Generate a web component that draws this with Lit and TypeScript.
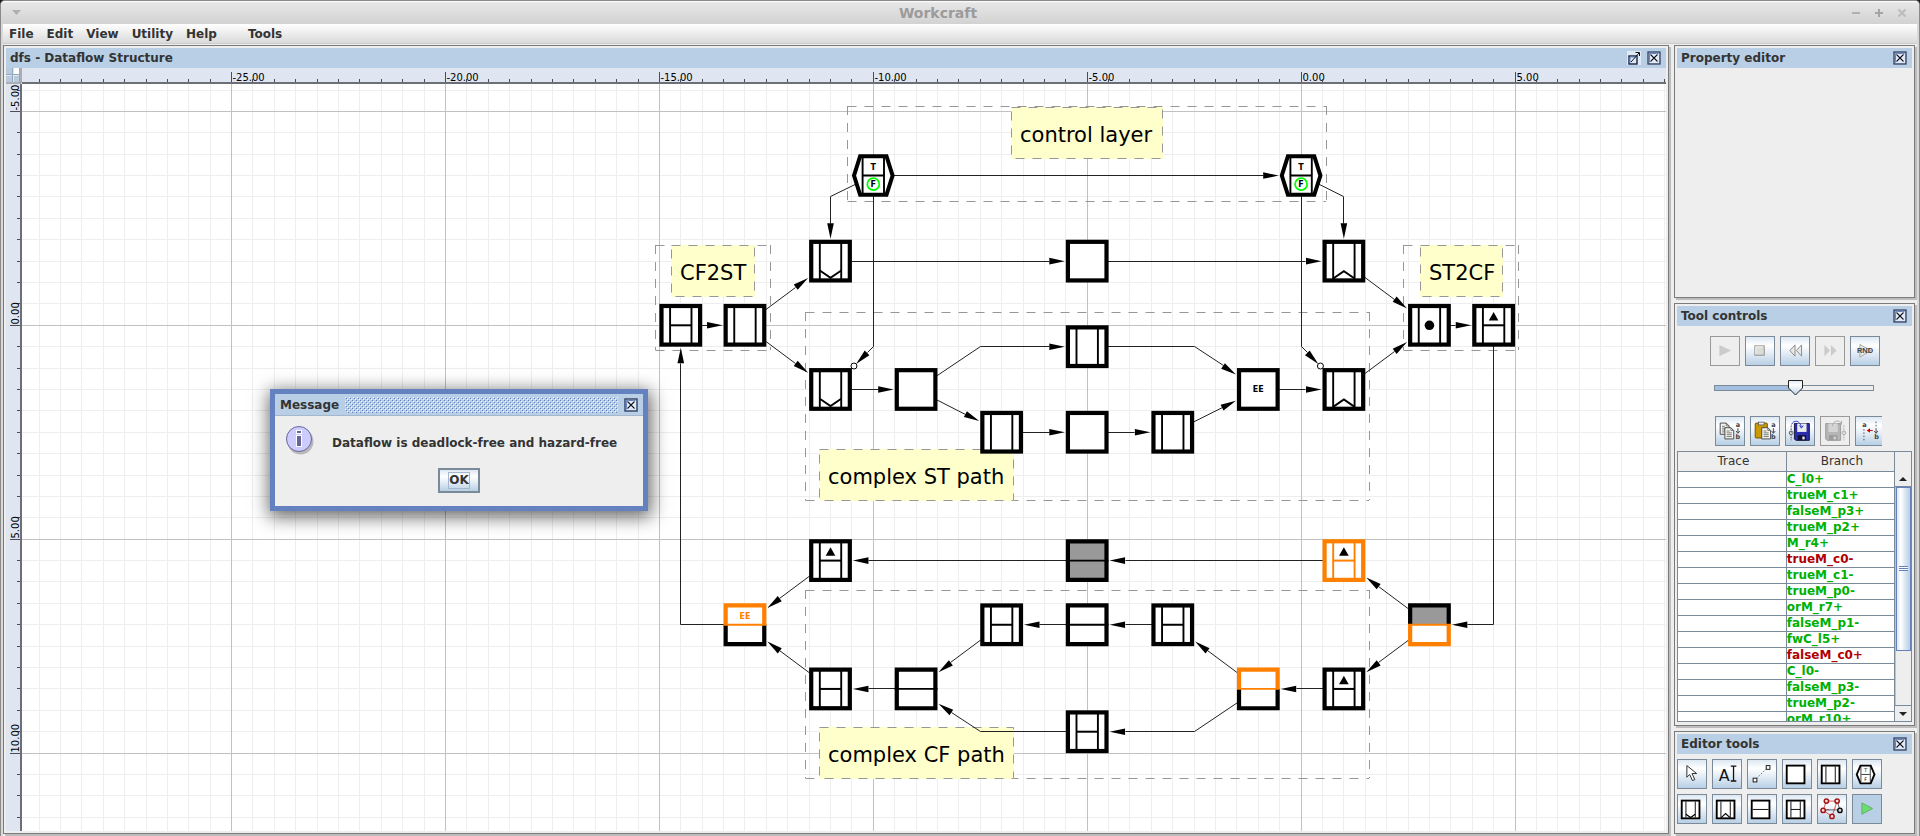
import { LitElement, html, svg, css, type SVGTemplateResult } from "lit";
import { customElement, property, state } from "lit/decorators.js";

/* ---------- Canvas geometry: model units to canvas pixels ---------- */
const UNIT = 42.78;
const ORIGIN_X = 1279.1;
const ORIGIN_Y = 241.3;
const px = (u: number) => u * UNIT + ORIGIN_X;
const py = (u: number) => u * UNIT + ORIGIN_Y;
const crisp = (v: number) => Math.floor(v) + 0.5;

type Point = [number, number];

interface NodeSpec {
  at: Point;
  kind: "logic" | "register" | "push" | "pop" | "cflogic" | "cfregister" | "control";
  color?: string;
  top?: string;
  bottom?: string;
  fillTop?: string;
  fillBottom?: string;
  text?: string;
  or?: boolean;
  dot?: boolean;
}

const ORANGE = "#ff8000";
const GREY = "#999999";

const NODES: NodeSpec[] = [
  { at: [-10, -3.5], kind: "control" },
  { at: [0, -3.5], kind: "control" },
  { at: [-11, -1.5], kind: "push" },
  { at: [-5, -1.5], kind: "logic" },
  { at: [1, -1.5], kind: "pop" },
  { at: [-14.5, 0], kind: "cfregister" },
  { at: [-13, 0], kind: "register" },
  { at: [3, 0], kind: "register", dot: true },
  { at: [4.5, 0], kind: "cfregister", or: true },
  { at: [-11, 1.5], kind: "push" },
  { at: [-9, 1.5], kind: "logic" },
  { at: [-5, 0.5], kind: "register" },
  { at: [-7, 2.5], kind: "register" },
  { at: [-5, 2.5], kind: "logic" },
  { at: [-3, 2.5], kind: "register" },
  { at: [-1, 1.5], kind: "logic", text: "EE" },
  { at: [1, 1.5], kind: "pop" },
  { at: [-11, 5.5], kind: "cfregister", or: true },
  { at: [-5, 5.5], kind: "cflogic", fillTop: GREY, fillBottom: GREY },
  { at: [1, 5.5], kind: "cfregister", color: ORANGE, or: true },
  { at: [-13, 7], kind: "cflogic", top: ORANGE, text: "EE" },
  { at: [-7, 7], kind: "cfregister" },
  { at: [-5, 7], kind: "cflogic" },
  { at: [-3, 7], kind: "cfregister" },
  { at: [3, 7], kind: "cflogic", bottom: ORANGE, fillTop: GREY },
  { at: [-11, 8.5], kind: "cfregister" },
  { at: [-9, 8.5], kind: "cflogic" },
  { at: [-1, 8.5], kind: "cflogic", top: ORANGE },
  { at: [1, 8.5], kind: "cfregister", or: true },
  { at: [-5, 9.5], kind: "cfregister" },
];

const ARCS: { path: Point[]; inverted?: boolean }[] = [
  { path: [[-10, -3.5], [0, -3.5]] },
  { path: [[-10, -3.5], [-11, -3], [-11, -1.5]] },
  { path: [[-10, -3.5], [-10, 0.5], [-11, 1.5]], inverted: true },
  { path: [[0, -3.5], [1, -3], [1, -1.5]] },
  { path: [[0, -3.5], [0, 0.5], [1, 1.5]], inverted: true },
  { path: [[-11, -1.5], [-5, -1.5]] },
  { path: [[-5, -1.5], [1, -1.5]] },
  { path: [[1, -1.5], [3, 0]] },
  { path: [[-14.5, 0], [-13, 0]] },
  { path: [[-13, 0], [-11, -1.5]] },
  { path: [[-13, 0], [-11, 1.5]] },
  { path: [[-11, 1.5], [-9, 1.5]] },
  { path: [[-9, 1.5], [-7.5, 0.5], [-5, 0.5]] },
  { path: [[-5, 0.5], [-2.5, 0.5], [-1, 1.5]] },
  { path: [[-9, 1.5], [-7, 2.5]] },
  { path: [[-7, 2.5], [-5, 2.5]] },
  { path: [[-5, 2.5], [-3, 2.5]] },
  { path: [[-3, 2.5], [-1, 1.5]] },
  { path: [[-1, 1.5], [1, 1.5]] },
  { path: [[1, 1.5], [3, 0]] },
  { path: [[3, 0], [4.5, 0]] },
  { path: [[4.5, 0], [4.5, 7], [3, 7]] },
  { path: [[3, 7], [1, 5.5]] },
  { path: [[3, 7], [1, 8.5]] },
  { path: [[1, 5.5], [-5, 5.5]] },
  { path: [[-5, 5.5], [-11, 5.5]] },
  { path: [[-11, 5.5], [-13, 7]] },
  { path: [[1, 8.5], [-1, 8.5]] },
  { path: [[-1, 8.5], [-3, 7]] },
  { path: [[-3, 7], [-5, 7]] },
  { path: [[-5, 7], [-7, 7]] },
  { path: [[-7, 7], [-9, 8.5]] },
  { path: [[-9, 8.5], [-11, 8.5]] },
  { path: [[-11, 8.5], [-13, 7]] },
  { path: [[-1, 8.5], [-2.5, 9.5], [-5, 9.5]] },
  { path: [[-5, 9.5], [-7.5, 9.5], [-9, 8.5]] },
  { path: [[-13, 7], [-14.5, 7], [-14.5, 0]] },
];

/* x1, y1, x2, y2 in canvas pixels */
const GROUPS: [number, number, number, number][] = [
  [825, 22, 1304, 117],
  [633, 161, 748, 266],
  [783, 228, 1347, 416],
  [1381, 161, 1496, 266],
  [783, 506, 1347, 694],
];

const LABELS: { text: string; x: number; y: number; w: number }[] = [
  { text: "control layer", x: 989, y: 23, w: 152 },
  { text: "CF2ST", x: 649, y: 161, w: 84 },
  { text: "ST2CF", x: 1398, y: 161, w: 83 },
  { text: "complex ST path", x: 797, y: 365, w: 195 },
  { text: "complex CF path", x: 797, y: 643, w: 195 },
];

/* Half-unit steps whose position falls inside a length of pixels */
const steps = (origin: number, length: number) => {
  const from = Math.ceil((-origin / UNIT) * 2);
  const to = Math.floor(((length - origin) / UNIT) * 2);
  return Array.from({ length: Math.max(0, to - from + 1) }, (_, i) => from + i);
};

function drawArc(arc: { path: Point[]; inverted?: boolean }): SVGTemplateResult {
  const pts = arc.path.map(([x, y]) => [px(x), py(y)] as Point);
  const [bx, by] = pts[pts.length - 1];
  const [ax, ay] = pts[pts.length - 2];
  const dx = bx - ax;
  const dy = by - ay;
  const len = Math.hypot(dx, dy);
  const ux = dx / len;
  const uy = dy / len;
  const half = UNIT / 2 + 1;
  const back = half / Math.max(Math.abs(ux), Math.abs(uy));
  let tx = bx - ux * back;
  let ty = by - uy * back;
  const bubble: Point = [tx - ux * 1.5, ty - uy * 1.5];
  if (arc.inverted) {
    tx -= ux * 4.5;
    ty -= uy * 4.5;
  }
  const hx = tx - ux * 15.5;
  const hy = ty - uy * 15.5;
  const line = [...pts.slice(0, -1), [hx, hy] as Point];
  const flat = (p: Point[]) =>
    p.map(([x, y]) => `${Math.round(x - 0.5) + 0.5},${Math.round(y - 0.5) + 0.5}`).join(" ");
  return svg`
    <polyline class="arc" points=${flat(line)}></polyline>
    <polygon points="${tx},${ty} ${hx - uy * 3.3},${hy + ux * 3.3} ${hx + uy * 3.3},${hy - ux * 3.3}"></polygon>
    ${arc.inverted ? svg`<circle class="bubble" cx=${bubble[0]} cy=${bubble[1]} r="3"></circle>` : ""}`;
}

function drawNode(n: NodeSpec): SVGTemplateResult {
  const c = n.color ?? "#000";
  const cx = px(n.at[0]);
  const cy = py(n.at[1]);
  const frame = svg`<rect x="-19.3" y="-19.3" width="38.6" height="38.6" fill="#fff" stroke=${c} stroke-width="4.2"></rect>`;
  const bars = svg`<path d="M-10.7-19V19M10.7-19V19" stroke=${c} stroke-width="1.9"></path>`;
  let body: SVGTemplateResult;
  switch (n.kind) {
    case "logic":
      body = svg`${frame}`;
      break;
    case "register":
      body = svg`${frame}${bars}`;
      break;
    case "push":
      body = svg`${frame}${bars}<path d="M-10.7 9.3L0 16.6L10.7 9.3" fill="none" stroke="#000" stroke-width="1.9"></path>`;
      break;
    case "pop":
      body = svg`${frame}${bars}<path d="M-10.7 17.4L0 10L10.7 17.4" fill="none" stroke="#000" stroke-width="1.9"></path>`;
      break;
    case "cfregister":
      body = svg`${frame}${bars}<path d="M-10.7 0H10.7" stroke=${c} stroke-width="2"></path>`;
      break;
    case "cflogic": {
      const t = n.top ?? "#000";
      const b = n.bottom ?? "#000";
      const mid = n.top ?? n.bottom ?? "#000";
      body = svg`
        <rect x="-18" y="-18" width="36" height="18" fill=${n.fillTop ?? "#fff"}></rect>
        <rect x="-18" y="0" width="36" height="18" fill=${n.fillBottom ?? "#fff"}></rect>
        <path d="M-19.3 0V-19.3H19.3V0" fill="none" stroke=${t} stroke-width="4.2"></path>
        <path d="M-19.3 0V19.3H19.3V0" fill="none" stroke=${b} stroke-width="4.2"></path>
        <path d="M-21.4 0H21.4" stroke=${mid} stroke-width="1.8"></path>`;
      break;
    }
    default:
      body = svg`
        <path d="M-13.2-19.3H13.2L19.3 0L13.2 19.3H-13.2L-19.3 0Z" fill="#fff" stroke="#000" stroke-width="4"></path>
        <path d="M-10.7-19V19M10.7-19V19M-10.7 0H10.7" stroke="#000" stroke-width="1.9"></path>
        <text class="tiny" x="0" y="-6">T</text>
        <circle cx="0" cy="8.6" r="6" fill="none" stroke="#00ff00" stroke-width="1.8"></circle>
        <text class="tiny" x="0" y="11.500">F</text>`;
  }
  return svg`<g transform="translate(${cx},${cy})">
    ${body}
    ${n.or ? svg`<path d="M0-13.300L4.800-4.800H-4.800Z"></path>` : ""}
    ${n.dot ? svg`<circle r="4.800"></circle>` : ""}
    ${n.text ? svg`<text class="tiny" x="0" y=${n.kind === "cflogic" ? -6 : 3} fill=${n.top ?? "#000"}>${n.text}</text>` : ""}
  </g>`;
}

/* ---------- Work area with rulers ---------- */
@customElement("model-canvas")
export class ModelCanvas extends LitElement {
  @state() private sheetWidth = 0;
  @state() private sheetHeight = 0;

  private observer = new ResizeObserver(() => this.measure());

  connectedCallback() {
    super.connectedCallback();
    this.observer.observe(this);
  }

  disconnectedCallback() {
    this.observer.disconnect();
    super.disconnectedCallback();
  }

  firstUpdated() {
    this.measure();
  }

  private measure() {
    this.sheetWidth = this.clientWidth - 16;
    this.sheetHeight = this.clientHeight - 16;
  }

  static styles = css`
    :host {
      display: grid;
      grid-template: 16px minmax(0, 1fr) / 16px minmax(0, 1fr);
      flex: 1;
      min-height: 0;
      font-family: "DejaVu Sans", sans-serif;
    }
    svg {
      display: block;
      width: 100%;
      height: 100%;
      overflow: hidden;
    }
    .corner, .ruler { background: #dfe5f1; }
    .sheet { background: #fff; }
    .tick { stroke: #4a4d55; stroke-width: 1; shape-rendering: crispEdges; }
    .edge { stroke: #6c6f76; stroke-width: 2; }
    .mark { font-size: 10px; fill: #000; }
    .minor { stroke: #eeeeee; shape-rendering: crispEdges; }
    .major { stroke: #c1c1c1; shape-rendering: crispEdges; }
    .arc { fill: none; stroke: #222; stroke-width: 1; }
    .bubble { fill: #fff; stroke: #000; stroke-width: 1; }
    .dash { fill: none; stroke: #979797; stroke-dasharray: 9 8; }
    .note { fill: #ffffcc; }
    .caption { font-size: 21px; }
    .tiny { font-size: 8px; font-weight: bold; text-anchor: middle; }
  `;

  render() {
    const columns = steps(ORIGIN_X, this.sheetWidth);
    const lines = steps(ORIGIN_Y, this.sheetHeight);
    return html`
      <svg class="corner" aria-hidden="true">
        <path d="M0 0h6v6H0zM0 8h6v6H0zM8 8h6v6H8z" fill="#b8cadc"></path>
        <path d="M8 0h6v6H8z" fill="#fff"></path>
        <path d="M0 6.500H14M6.500 0V14M13.500 0V14" stroke="#93a9bf"></path>
        <path d="M15 0V15H0" stroke="#777" fill="none"></path>
      </svg>
      <svg class="ruler">
        ${columns.map((i) => {
          const x = crisp(px(i / 2));
          return i % 10 === 0
            ? svg`<line class="tick" x1=${x} x2=${x} y1="4" y2="15"></line>
                <text class="mark" x=${x + 1} y="13">${(i / 2).toFixed(2)}</text>`
            : svg`<line class="tick" x1=${x} x2=${x} y1="11" y2="15"></line>`;
        })}
        <line class="edge" x1="0" x2="100%" y1="15" y2="15"></line>
      </svg>
      <svg class="ruler">
        ${lines.map((i) => {
          const y = crisp(py(i / 2));
          return i % 10 === 0
            ? svg`<line class="tick" x1="4" x2="15" y1=${y} y2=${y}></line>
                <text class="mark" transform="translate(13,${y - 1}) rotate(-90)">${(i / 2).toFixed(2)}</text>`
            : svg`<line class="tick" x1="11" x2="15" y1=${y} y2=${y}></line>`;
        })}
        <line class="edge" x1="15" x2="15" y1="0" y2="100%"></line>
      </svg>
      <svg class="sheet">
        ${[false, true].map((major) => [
          ...columns.filter((i) => (i % 10 === 0) === major).map((i) => {
            const x = crisp(px(i / 2));
            return svg`<line class=${major ? "major" : "minor"} x1=${x} x2=${x} y1="0" y2="100%"></line>`;
          }),
          ...lines.filter((i) => (i % 10 === 0) === major).map((i) => {
            const y = crisp(py(i / 2));
            return svg`<line class=${major ? "major" : "minor"} x1="0" x2="100%" y1=${y} y2=${y}></line>`;
          }),
        ])}
        ${GROUPS.map(([a, b, c, d]) => svg`<path class="dash"
          d="M${a + 0.5} ${b + 0.5}H${c}M${c + 0.5} ${b}V${d}M${a + 0.5} ${d + 0.5}H${c}M${a + 0.5} ${b}V${d}"></path>`)}
        ${LABELS.map((l) => svg`
          <rect class="note" x=${l.x} y=${l.y} width=${l.w} height="52"></rect>
          <rect class="dash" x=${l.x + 0.5} y=${l.y + 0.5} width=${l.w - 1} height="51"></rect>
          <text class="caption" x=${l.x + 9} y=${l.y + 35}>${l.text}</text>`)}
        ${ARCS.map(drawArc)}
        ${NODES.map(drawNode)}
      </svg>
    `;
  }
}

/* ---------- Docked panel with a caption bar ---------- */
const closeIcon = html`<svg viewBox="0 0 14 14" width="14" height="14" aria-hidden="true">
  <rect x="1" y="1" width="12" height="12" fill="#dce8f6" stroke="#2f3f66" stroke-width="1.400"></rect>
  <path d="M2.500 11.500V2.500H11.500" stroke="#6382bf" fill="none"></path>
  <path d="M3.500 3.500L10.500 10.500M10.500 3.500L3.500 10.500" stroke="#fff" stroke-width="2.600"></path>
  <path d="M3.500 3.500L10.500 10.500M10.500 3.500L3.500 10.500" stroke="#0c1024" stroke-width="1.200"></path>
</svg>`;

@customElement("dock-panel")
export class DockPanel extends LitElement {
  @property() caption = "";
  @property({ type: Boolean }) maximizable = false;

  static styles = css`
    :host {
      display: flex;
      flex-direction: column;
      min-width: 0;
      min-height: 0;
      padding: 2px;
      border: 1px solid #7b7b7b;
      box-shadow: 2px 2px 0 #bdbdbd;
      background: #eeeeee;
    }
    .bar {
      display: flex;
      align-items: center;
      gap: 6px;
      height: 20px;
      flex: none;
      padding: 0 5px 0 4px;
      background: #b8cfe5;
    }
    .caption {
      flex: 1;
      margin: 0;
      font: bold 12px/20px "DejaVu Sans", sans-serif;
      color: #333;
    }
    .tool {
      display: block;
      padding: 0;
      border: 0;
      background: #dfeaf5;
      width: 14px;
      height: 14px;
      line-height: 0;
    }
  `;

  render() {
    return html`
      <div class="bar">
        <h2 class="caption">${this.caption}</h2>
        ${this.maximizable
          ? html`<button class="tool" aria-label="Maximize">
              <svg viewBox="0 0 14 14" width="14" height="14">
                <rect x="2" y="5" width="8" height="8" fill="#dce8f6" stroke="#1a2340" stroke-width="1.400"></rect>
                <path d="M3 12V6h7" stroke="#6382bf" fill="none"></path>
                <path d="M4 11L12 2M8.500 1.500H12.500V5" stroke="#111" fill="none"></path>
              </svg>
            </button>`
          : ""}
        <button class="tool" aria-label="Close">${closeIcon}</button>
      </div>
      <slot></slot>
    `;
  }
}

/* ---------- Tool icons ---------- */
const icon = (body: SVGTemplateResult) =>
  html`<svg viewBox="0 0 30 30" width="30" height="30" aria-hidden="true">${body}</svg>`;

const docs = (x: number, y: number) => svg`<g transform="translate(${x},${y})">
  <path d="M0 0H6.500L9.500 3V12H0Z" fill="#f4f4ee" stroke="#444"></path>
  <path d="M6.500 0V3H9.500M2 3.500H5M2 5.500H7.500M2 7.500H7.500M2 9.500H7.500" stroke="#555" stroke-width=".8" fill="none"></path></g>`;
const aToB = (x: number) => svg`
  <text x=${x} y="11" font-size="7" font-weight="bold" text-anchor="middle" fill="#444">a</text>
  <text x=${x} y="24" font-size="7" font-weight="bold" text-anchor="middle" fill="#444">b</text>
  <path d="M${x} 12V17M${x - 2} 15L${x} 17.500L${x + 2} 15" stroke="#444" fill="none"></path>`;
const floppy = (body: string, line: string, label: string) => svg`
  <path d="M9 7H25V25H10.500L9 23.500Z" fill=${body} stroke=${line}></path>
  <rect x="12" y="7" width="10" height="9" fill=${label}></rect>
  <rect x="12.500" y="19.500" width="9" height="5.500" fill=${line}></rect>
  <rect x="17.500" y="21" width="2.500" height="3" fill=${label}></rect>`;

const PLAYBACK = [
  { name: "Play", off: true, art: svg`<path d="M9 8.500L21.500 14.500L9 20.500Z" fill="#cbcbcb"></path>` },
  { name: "Stop", art: svg`<rect x="9.500" y="9.500" width="10" height="10" fill="#dcdcd8" stroke="#8a8a8a"></rect><path d="M10.500 18.500V10.500H18.500" stroke="#f8f8f8" fill="none"></path>` },
  { name: "Step back", art: svg`<path d="M15 8.500V20.500L9.500 14.500ZM22 8.500V20.500L16.500 14.500Z" fill="#e8e8e4" stroke="#858585"></path>` },
  { name: "Step forward", off: true, art: svg`<path d="M9 8.500L15 14.500L9 20.500ZM16 8.500L22 14.500L16 20.500Z" fill="#cbcbcb"></path>` },
  { name: "Random", art: svg`<path d="M9.500 8L21.500 14.500L9.500 21.500Z" fill="#e6e8ea" stroke="#a5a5a5"></path><text x="15" y="17.500" font-size="8" font-weight="bold" text-anchor="middle" fill="#444" font-family="Liberation Sans">RND</text>` },
];

const TRACE_TOOLS = [
  { name: "Copy trace", art: svg`${docs(4.5, 6.5)}${docs(9.5, 11.5)}${aToB(23.5)}` },
  { name: "Paste trace", art: svg`<rect x="4.500" y="6.500" width="13" height="16" rx="1" fill="#c99a06" stroke="#6b5203"></rect><rect x="8" y="5.500" width="6" height="3" fill="#eee" stroke="#555" stroke-width=".8"></rect>${docs(11.5, 11.5)}${aToB(24)}` },
  { name: "Save trace", art: svg`${floppy("#2c2cb0", "#111136", "#ececec")}<path d="M6 8C8 3 15 3 16.500 11M14.500 9L16.500 12L18.500 9" stroke="#2233cc" fill="none"></path><path d="M5.500 9V25" stroke="#555" stroke-dasharray="2 1"></path><circle cx="5.500" cy="17" r="2" fill="none" stroke="#555"></circle>` },
  { name: "Load trace", off: true, art: svg`<g transform="translate(-4,0)">${floppy("#b5b5b5", "#9b9b9b", "#d4d4d4")}</g><path d="M12 10C13 3 20 3 22 7M22 4V8H18" stroke="#aaa" fill="none"></path><path d="M24.500 9V25" stroke="#aaa" stroke-dasharray="2 1"></path><circle cx="24.500" cy="17" r="2" fill="none" stroke="#aaa"></circle>` },
  { name: "Merge trace", art: svg`<text x="9" y="11" font-size="7" font-weight="bold" text-anchor="middle" fill="#444">a</text><text x="22" y="24" font-size="7" font-weight="bold" text-anchor="middle" fill="#444">b</text><path d="M8.500 13V25M21.500 5V12" stroke="#444" stroke-dasharray="1.500 2"></path><path d="M21.500 12V17M19.500 15L21.500 17.500L23.500 15" stroke="#444" fill="none"></path><path d="M18 14.500H13" stroke="#c00"></path><path d="M15 12L11.500 14.500L15 17Z" fill="#c00"></path>` },
];

const box = svg`<rect x="4" y="6" width="19" height="19" fill="#fff" stroke="#000" stroke-width="2"></rect>`;
const sides = svg`<path d="M8.500 7V24M18.500 7V24" stroke="#000"></path>`;

const EDITOR_TOOLS = [
  { name: "Select", art: svg`<path d="M9.500 6L9.500 18.500L12.500 15.500L15.500 22L18 21L15 14.500H20Z" fill="#fff" stroke="#222"></path>` },
  { name: "Text note", art: svg`<text x="12" y="22" font-size="17" text-anchor="middle" fill="#111">A</text><path d="M19 6.500H25M19 22.500H25M22 6.500V22.500" stroke="#111" stroke-width="1.400"></path>` },
  { name: "Connect", art: svg`<path d="M9 20L20 9" stroke="#555" stroke-dasharray="1.500 2"></path><rect x="5.500" y="19.500" width="4" height="4" fill="#fff" stroke="#111"></rect><rect x="19.500" y="6" width="4" height="4" fill="#fff" stroke="#111"></rect>` },
  { name: "Logic", art: box },
  { name: "Register", art: svg`${box}${sides}` },
  { name: "Control register", art: svg`<path d="M8 6H19L23 15.500L19 25H8L4 15.500Z" fill="#fff" stroke="#000" stroke-width="2"></path><path d="M8.500 7V24M18.500 7V24M9 15.500H18" stroke="#000" stroke-width=".8"></path><text x="13.500" y="13" font-size="5" text-anchor="middle">T</text><text x="13.500" y="22" font-size="5" text-anchor="middle">F</text>` },
  { name: "Push register", art: svg`${box}${sides}<path d="M8.500 20.500L13.500 24L18.500 20.500" fill="none" stroke="#000" stroke-width="1.300"></path>` },
  { name: "Pop register", art: svg`${box}${sides}<path d="M8.500 24.500L13.500 20L18.500 24.500" fill="none" stroke="#000" stroke-width="1.300"></path>` },
  { name: "Counterflow logic", art: svg`${box}<path d="M5 15.500H22" stroke="#000"></path>` },
  { name: "Counterflow register", art: svg`${box}${sides}<path d="M8.500 15.500H18.500" stroke="#000"></path>` },
  { name: "Cycle analyser", art: svg`<path d="M9 6.500H20.500L15 23L5.500 16.500L9 6.500M5.500 16.500L12 15.500" fill="none" stroke="#e04848"></path><path d="M8 16H23.500L20.500 6.500" fill="none" stroke="#555"></path>
      <g fill="#f4dede" stroke="#a01515" stroke-width="1.600"><circle cx="9" cy="6.500" r="2.300"></circle><circle cx="20.500" cy="6.500" r="2.300"></circle><circle cx="5.500" cy="16.500" r="2.300"></circle><circle cx="15" cy="23" r="2.300"></circle></g><circle cx="23.500" cy="16.500" r="2.300" fill="#ddd" stroke="#111" stroke-width="1.600"></circle>` },
  { name: "Simulation", on: true, art: svg`<path d="M9.500 8.500L21 14.500L9.500 20.500Z" fill="#6edc6e" stroke="#5aae6c"></path>` },
];

const BRANCH: [string, boolean?][] = [
  ["C_l0+"], ["trueM_c1+"], ["falseM_p3+"], ["trueM_p2+"], ["M_r4+"],
  ["trueM_c0-", true], ["trueM_c1-"], ["trueM_p0-"], ["orM_r7+"], ["falseM_p1-"],
  ["fwC_l5+"], ["falseM_c0+", true], ["C_l0-"], ["falseM_p3-"], ["trueM_p2-"], ["orM_r10+"],
];

/* ---------- Application window ---------- */
@customElement("app-root")
export class AppRoot extends LitElement {
  static styles = css`
    :host {
      display: block;
      height: 100vh;
      background: #1a1a1a;
      font-family: "DejaVu Sans", sans-serif;
      color: #333;
    }
    * { box-sizing: border-box; }
    button { font: inherit; color: inherit; margin: 0; padding: 0; }
    .window {
      display: flex;
      flex-direction: column;
      height: 100%;
      border: 1px solid #8a8a8a;
      border-bottom: 0;
      border-radius: 5px 5px 0 0;
      background: #d9d9d9;
      overflow: hidden;
    }
    .titlebar {
      display: flex;
      align-items: center;
      height: 23px;
      flex: none;
      padding: 0 6px 0 11px;
      background: linear-gradient(#fff 0, #e6e6e6 2px, #d2d2d2);
    }
    .title {
      flex: 1;
      margin: 0 0 0 10px;
      text-align: center;
      font-size: 14px;
      font-weight: bold;
      line-height: 22px;
      color: #9b9b9b;
    }
    .winbutton { border: 0; background: none; width: 23px; height: 16px; line-height: 0; }
    .winbutton.lead { width: 10px; }
    .body {
      display: flex;
      flex-direction: column;
      flex: 1;
      min-height: 0;
      margin: 0 2px;
      background: #eeeeee;
    }
    .menubar {
      display: flex;
      align-items: center;
      gap: 13px;
      height: 20px;
      flex: none;
      padding: 0 6px;
      background: linear-gradient(#fff, #dadada);
      border-bottom: 1px solid #ccc;
    }
    .menu {
      border: 0;
      background: none;
      font-size: 12px;
      font-weight: bold;
      line-height: 18px;
    }
    .menu.apart { margin-left: 18px; }
    .workspace {
      display: flex;
      flex: 1;
      min-height: 0;
      gap: 5px;
      padding: 1px 2px 2px 0;
    }
    .editor { flex: 1; }
    .docks {
      display: grid;
      grid-template-rows: 253px minmax(0, 1fr) 103px;
      gap: 5px;
      width: 241px;
      flex: none;
    }
    .controls { display: flex; flex-direction: column; flex: 1; min-height: 0; }
    .strip { width: 175px; margin: 0 auto; overflow: hidden; display: flex; flex-direction: column; }
    .row { display: flex; gap: 5px; }
    .playback { padding: 10px 2px 14px 3px; }
    .tracebar { padding: 20px 0 5px 8px; }
    .tool {
      width: 30px;
      height: 30px;
      flex: none;
      border: 1px solid #7a8a99;
      background: linear-gradient(#dde8f3, #fff 30%, #dde8f3 65%, #b8cfe5);
      line-height: 0;
      display: flex;
      align-items: center;
      justify-content: center;
    }
    .tool:disabled { border-color: #999; background: #eeeeee; }
    .tool.on { background: #b8cfe5; }
    .speed {
      appearance: none;
      width: 160px;
      height: 16px;
      margin: 0 0 0 7px;
      background: none;
    }
    .speed::-webkit-slider-runnable-track {
      height: 6px;
      border: 1px solid #7a8a99;
      background: linear-gradient(90deg, #a3bfe0 51%, #eeeeee 51%);
    }
    .speed::-webkit-slider-thumb {
      appearance: none;
      width: 15px;
      height: 16px;
      margin-top: -6px;
      background: url('data:image/svg+xml,<svg xmlns="http://www.w3.org/2000/svg" width="15" height="16"><defs><linearGradient id="g" x2="0" y2="1"><stop stop-color="%23dde8f3"/><stop offset=".3" stop-color="white"/><stop offset="1" stop-color="%23b8cfe5"/></linearGradient></defs><path d="M.5 .5H14.500V8L7.500 15L.5 8Z" fill="url(%23g)" stroke="%23222"/></svg>');
    }
    .list {
      display: flex;
      flex: 1;
      min-height: 0;
      border: 1px solid #7a8a99;
      margin: 0 0 1px;
    }
    .rows { flex: 1; min-width: 0; overflow: hidden; }
    table { width: 100%; border-collapse: collapse; table-layout: fixed; font-size: 12px; }
    th {
      height: 19px;
      padding: 1px 0 0 3px;
      font-weight: normal;
      line-height: 17px;
      background: #eeeeee;
      border-bottom: 1px solid #7a8a99;
      border-right: 1px solid #7a8a99;
    }
    td {
      height: 16px;
      padding: 0;
      line-height: 15px;
      font-weight: bold;
      background: #fff;
      color: #00b000;
      white-space: nowrap;
      border-bottom: 1px solid #7a8a99;
      border-right: 1px solid #7a8a99;
    }
    td.alert { color: #b00000; }
    .scroll { display: flex; flex-direction: column; width: 16px; padding-top: 19px; flex: none; }
    .step {
      height: 16px;
      flex: none;
      border: 0;
      border-bottom: 1px solid #7a8a99;
      background: #eeeeee;
      line-height: 0;
    }
    .step.down { border-bottom: 0; border-top: 1px solid #7a8a99; }
    .track { flex: 1; min-height: 0; background: #eee; border-left: 1px solid #b8c4d0; }
    .thumb {
      height: 75%;
      border: 1px solid #6382bf;
      background: linear-gradient(90deg, #dde8f3, #fff 30%, #dde8f3 60%, #b8cfe5);
      display: flex;
      align-items: center;
      justify-content: center;
    }
    .grip { width: 9px; height: 5px; background: repeating-linear-gradient(#6382bf 0 1px, #fff 1px 2px); }
    .palette {
      display: grid;
      grid-template-columns: repeat(6, 30px);
      gap: 5px;
      padding-top: 5px;
    }
    .dialog {
      position: absolute;
      left: 270px;
      top: 389px;
      width: 378px;
      border: 5px solid #6382bf;
      background: #eeeeee;
      box-shadow: 1px 4px 17px 2px rgba(0, 0, 0, 0.6);
      color: #333;
      font-size: 12px;
      font-weight: bold;
    }
    .dialogbar {
      display: flex;
      align-items: center;
      gap: 6px;
      height: 22px;
      padding: 0 5px;
      background: #b8cfe5;
      border-bottom: 1px solid #a3b8cc;
    }
    .dialogtitle { margin: 0; font-size: 12px; line-height: 20px; }
    .hatch {
      flex: 1;
      height: 16px;
      background: url('data:image/svg+xml,<svg xmlns="http://www.w3.org/2000/svg" width="4" height="4" shape-rendering="crispEdges"><path d="M0 0h1v1H0zM2 2h1v1H2z" fill="white"/><path d="M1 1h1v1H1zM3 3h1v1H3z" fill="%236382bf"/></svg>');
    }
    .close { border: 0; width: 14px; height: 14px; background: none; line-height: 0; }
    .message { display: flex; gap: 17px; align-items: center; padding: 9px 10px 0; }
    .badge { flex: none; }
    .text { margin: 0; padding-top: 3px; line-height: 18px; white-space: nowrap; }
    .answer { display: flex; justify-content: center; padding: 11px 0 13px; }
    .ok {
      width: 42px;
      height: 25px;
      border: 2px solid #7a8a99;
      background: linear-gradient(#dde8f3, #fff 30%, #dde8f3 65%, #b8cfe5);
      display: flex;
      align-items: center;
      justify-content: center;
    }
    .focus { border: 1px solid #a3b8cc; line-height: 15px; }
  `;

  render() {
    return html`
      <div class="window">
        <header class="titlebar">
          <button class="winbutton lead" aria-label="Window menu">
            <svg width="10" height="8"><path d="M0 1H9L4.500 6Z" fill="#b0b0b0"></path></svg>
          </button>
          <h1 class="title">Workcraft</h1>
          <button class="winbutton" aria-label="Minimize"><svg width="10" height="10"><path d="M1 5H9" stroke="#b0b0b0" stroke-width="2"></path></svg></button>
          <button class="winbutton" aria-label="Maximize"><svg width="10" height="10"><path d="M1 5H9M5 1V9" stroke="#a4a4a4" stroke-width="2"></path></svg></button>
          <button class="winbutton" aria-label="Close"><svg width="10" height="10"><path d="M1.500 1.500L8.500 8.500M8.500 1.500L1.500 8.500" stroke="#bcbcbc" stroke-width="2"></path></svg></button>
        </header>
        <div class="body">
          <nav class="menubar">
            ${["File", "Edit", "View", "Utility", "Help"].map((m) => html`<button class="menu">${m}</button>`)}
            <button class="menu apart">Tools</button>
          </nav>
          <main class="workspace">
            <dock-panel class="editor" caption="dfs - Dataflow Structure" maximizable>
              <model-canvas></model-canvas>
            </dock-panel>
            <aside class="docks">
              <dock-panel caption="Property editor"></dock-panel>
              <dock-panel caption="Tool controls">
                <div class="controls">
                  <div class="strip">
                    <div class="row playback">
                      ${PLAYBACK.map((t) => html`<button class="tool" aria-label=${t.name} ?disabled=${!!t.off}>${icon(t.art)}</button>`)}
                    </div>
                    <input class="speed" type="range" min="0" max="100" .value=${"51"} aria-label="Playback speed" />
                    <div class="row tracebar">
                      ${TRACE_TOOLS.map((t) => html`<button class="tool" aria-label=${t.name} ?disabled=${!!t.off}>${icon(t.art)}</button>`)}
                    </div>
                  </div>
                  <div class="list">
                    <div class="rows">
                      <table>
                        <thead><tr><th scope="col">Trace</th><th scope="col">Branch</th></tr></thead>
                        <tbody>
                          ${BRANCH.map(([name, alert]) => html`<tr><td></td><td class=${alert ? "alert" : ""}>${name}</td></tr>`)}
                        </tbody>
                      </table>
                    </div>
                    <div class="scroll">
                      <button class="step" aria-label="Scroll up"><svg width="10" height="6"><path d="M1 5H9L5 1Z" fill="#222"></path></svg></button>
                      <div class="track"><div class="thumb"><div class="grip"></div></div></div>
                      <button class="step down" aria-label="Scroll down"><svg width="10" height="6"><path d="M1 1H9L5 5Z" fill="#222"></path></svg></button>
                    </div>
                  </div>
                </div>
              </dock-panel>
              <dock-panel caption="Editor tools">
                <div class="palette">
                  ${EDITOR_TOOLS.map((t) => html`<button class="tool ${t.on ? "on" : ""}" aria-label=${t.name}>${icon(t.art)}</button>`)}
                </div>
              </dock-panel>
            </aside>
          </main>
        </div>
      </div>
      <section class="dialog" role="dialog" aria-label="Message">
        <div class="dialogbar">
          <h2 class="dialogtitle">Message</h2>
          <div class="hatch"></div>
          <button class="close" aria-label="Close">${closeIcon}</button>
        </div>
        <div class="message">
          <svg class="badge" width="30" height="32" viewBox="0 0 30 32" aria-hidden="true">
            <circle cx="15.500" cy="16.500" r="13" fill="#000" opacity=".22"></circle>
            <circle cx="14" cy="14" r="12.500" fill="#ccccff" stroke="#666699"></circle>
            <path d="M11 5H17V9H11ZM11 10H17V22H11Z" fill="#fff"></path>
            <path d="M12 6H16V8H12ZM12 11H16V21H12Z" fill="#666699"></path>
          </svg>
          <p class="text">Dataflow is deadlock-free and hazard-free</p>
        </div>
        <div class="answer"><button class="ok"><span class="focus">OK</span></button></div>
      </section>
    `;
  }
}
